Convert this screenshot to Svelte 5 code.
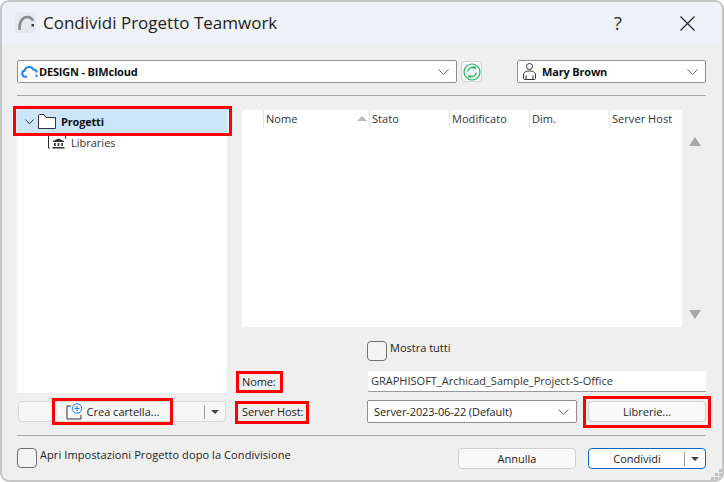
<script>
  const columns = [
    { label: 'Stato', w: 80 },
    { label: 'Modificato', w: 80 },
    { label: 'Dim.', w: 80 },
    { label: 'Server Host', w: 71 }
  ];
</script>

<div class="screen">
  <div class="dialog">
    <header class="titlebar">
      <svg class="logo" width="21" height="21" viewBox="0 0 21 21">
        <rect width="21" height="21" rx="3" fill="#e6e9ed" />
        <path d="M4.500 18 C4 10 7.500 5 12 5 C15 5 17 6.500 18 9" fill="none" stroke="#8a8a8a" stroke-width="2.600" />
        <rect x="16.500" y="12" width="2.500" height="2.500" fill="#3a3a3a" />
      </svg>
      <span class="title">Condividi Progetto Teamwork</span>
      <span class="help">?</span>
      <svg class="close" width="15" height="15" viewBox="0 0 15 15">
        <path d="M.5.500 14.500 14.500M14.500.5.500 14.500" stroke="#222" stroke-width="1.200" />
      </svg>
    </header>

    <div class="body">
      <div class="toprow">
        <div class="select server">
          <svg width="17" height="13" viewBox="0 0 17 13">
            <path d="M6 11.800H4.200A3.200 3.200 0 0 1 3.600 5.500 4.800 4.800 0 0 1 12.400 4.500 3.500 3.500 0 0 1 15.800 7.500" fill="none" stroke="#1b84ee" stroke-width="2" />
            <path d="M15.500 9.500v2.500" stroke="#1b84ee" stroke-width="1.800" />
          </svg>
          <b>DESIGN - BIMcloud</b>
          <svg class="chev" width="11" height="6" viewBox="0 0 11 6"><path d="M.5.500 5.500 5.300 10.500.5" fill="none" stroke="#6a6a6a" /></svg>
        </div>
        <div class="refresh">
          <svg width="18" height="18" viewBox="0 0 18 18">
            <circle cx="9" cy="9" r="8" fill="none" stroke="#22b463" stroke-width="1.200" />
            <path d="M4.800 8.500A4.300 4.300 0 0 1 11.500 5.300M13.200 9.500A4.300 4.300 0 0 1 6.500 12.700" fill="none" stroke="#22b463" stroke-width="1.300" />
            <path d="M9.500 3.200 13 3.400 12.300 6.800ZM8.500 14.800 5 14.600 5.700 11.200Z" fill="#22b463" />
          </svg>
        </div>
        <div class="select user">
          <svg width="13" height="17" viewBox="0 0 13 17" fill="none" stroke="#333">
            <circle cx="6.500" cy="3.500" r="3" />
            <path d="M2 16.500h9c1 0 1.500-.5 1.500-1.500v-3c0-2-1.500-3.500-4-4h-4C2 8.500.5 10 .5 12v3c0 1 .5 1.500 1.500 1.500ZM3 12.500v4M10 12.500v4" />
          </svg>
          <b>Mary Brown</b>
          <svg class="chev" width="11" height="6" viewBox="0 0 11 6"><path d="M.5.500 5.500 5.300 10.500.5" fill="none" stroke="#6a6a6a" /></svg>
        </div>
      </div>

      <hr class="rule first" />

      <div class="main">
        <div class="left">
          <div class="tree">
            <div class="node selected">
              <svg width="9" height="6" viewBox="0 0 9 6"><path d="M.5.500 4.500 4.800 8.500.5" fill="none" stroke="#333" /></svg>
              <svg class="folder" width="18" height="15" viewBox="0 0 18 15"><path d="M.5 14.500V1.500C.5 1 1 .5 1.500.5H6L8 3.500H17.500V14.500Z" fill="#fff" stroke="#333" /></svg>
              <b>Progetti</b>
            </div>
            <div class="node lib">
              <svg width="18" height="16" viewBox="0 0 18 16">
                <path d="M.5 15V.5H5.500L7 2.500H17.500V6M.5 15H2" fill="none" stroke="#333" />
                <path d="M5 8 10.500 5.500 16 8V9H5ZM6 10H7.700V13H6ZM9.700 10H11.300V13H9.700ZM13.300 10H15V13H13.300ZM4.500 14H16.500V15.500H4.500Z" fill="#333" />
              </svg>
              <span>Libraries</span>
            </div>
          </div>
          <div class="newfolder">
            <div class="nf-main">
              <svg width="17" height="17" viewBox="0 0 17 17" fill="none">
                <path d="M5 3H1V16H15V12" stroke="#333" />
                <circle cx="11" cy="5.500" r="4.700" stroke="#1a7fe8" />
                <path d="M11 3v5M8.500 5.500h5" stroke="#1a7fe8" />
              </svg>
              <span>Crea cartella...</span>
            </div>
            <div class="nf-arrow"><i class="tri"></i></div>
          </div>
        </div>

        <div class="right">
          <div class="listrow">
            <div class="table">
              <div class="thead">
                <div class="th spacer"></div>
                <div class="th name"><span>Nome</span><i class="sort"></i></div>
                {#each columns as c}
                  <div class="th" style="width:{c.w}px">{c.label}</div>
                {/each}
              </div>
            </div>
            <div class="scroll">
              <i class="up"></i>
              <i class="down"></i>
            </div>
          </div>

          <div class="show">
            <span class="check"></span>
            <span>Mostra tutti</span>
          </div>

          <div class="fields">
            <span class="lbl nome">Nome:</span>
            <div class="input">GRAPHISOFT_Archicad_Sample_Project-S-Office</div>
            <span class="lbl host">Server Host:</span>
            <div class="hostrow">
              <div class="select version">
                <span>Server-2023-06-22 (Default)</span>
                <svg class="chev" width="11" height="6" viewBox="0 0 11 6"><path d="M.5.500 5.500 5.300 10.500.5" fill="none" stroke="#6a6a6a" /></svg>
              </div>
              <div class="btn lib-btn">Librerie...</div>
            </div>
          </div>
        </div>
      </div>

      <hr class="rule second" />

      <div class="footer">
        <span class="check"></span>
        <span class="open">Apri Impostazioni Progetto dopo la Condivisione</span>
        <div class="btn cancel">Annulla</div>
        <div class="btn share">
          <span class="share-label">Condividi</span>
          <span class="share-arrow"><i class="tri"></i></span>
        </div>
      </div>
    </div>

    <svg class="grip" width="11" height="11" viewBox="0 0 11 11" fill="#c0c0c0">
      <rect x="8" y="0" width="3" height="3" /><rect x="4" y="4" width="3" height="3" /><rect x="8" y="4" width="3" height="3" />
      <rect x="0" y="8" width="3" height="3" /><rect x="4" y="8" width="3" height="3" /><rect x="8" y="8" width="3" height="3" />
    </svg>

    <div class="mark m1"></div>
    <div class="mark m2"></div>
    <div class="mark m3"></div>
    <div class="mark m4"></div>
    <div class="mark m5"></div>
  </div>
</div>

<style>
  :global(body) { margin: 0; background: #fff; }
  .screen { width: 724px; height: 482px; overflow: hidden; font: 11px "Open Sans", "Noto Sans", sans-serif; color: #1b1b1b; }
  .dialog {
    position: relative; box-sizing: border-box; width: 724px; height: 482px;
    border: 2px solid #c6c6c6; border-radius: 9px; background: #efefef; overflow: hidden;
  }
  .titlebar { height: 43px; background: #eef2f6; display: flex; align-items: center; padding-left: 13px; }
  .logo { margin: -2px 7px 0 0; }
  .title { font-size: 17px; color: #222; flex: 1; margin-top: -2px; }
  .help { font-size: 19px; color: #333; margin: -2px 58px 0 0; }
  .close { margin-right: 27px; }

  .body { padding: 15px 16px 0 15px; }
  .toprow { display: flex; height: 23px; }
  .select {
    box-sizing: border-box; height: 23px; display: flex; align-items: center; background: #fff;
    border: 1px solid #8f8f8f; border-radius: 2px; padding-right: 7px;
  }
  .select b, .node b { font-weight: 700; color: #111; letter-spacing: -0.18px; }
  .chev { margin-left: auto; }
  .server { width: 440px; padding-left: 3px; gap: 1px; }
  .refresh {
    box-sizing: border-box; width: 21px; height: 21px; margin: 1px 0 0 4px; border: 1px solid #d4d4d4; border-radius: 3px;
    background: #f6f6f6; display: flex; align-items: center; justify-content: center;
  }
  .user { width: 189px; margin-left: 35px; padding-left: 5px; gap: 6px; }
  hr.rule { border: 0; height: 1px; background: #a9a9a9; margin: 0; }
  hr.first { width: 689px; margin-top: 12px; }
  hr.second { width: 689px; margin-top: 12px; }

  .main { display: flex; margin-top: 13px; height: 314px; }
  .left { width: 210px; display: flex; flex-direction: column; }
  .tree { height: 284px; background: #fff; }
  .node { display: flex; align-items: center; }
  .selected { height: 25px; background: #cbe6fb; padding-left: 8px; gap: 4px; }
  .selected b { margin-left: 1px; }
  .lib { height: 18px; padding-left: 31px; gap: 5px; color: #333; }
  .lib svg { margin-top: -4px; }
  .lib span { margin-top: -2px; }
  .newfolder {
    box-sizing: border-box; width: 208px; height: 21px; margin: 8px 0 0 1px; display: flex; align-items: center;
    background: #f6f6f6; border: 1px solid #d8d8d8; border-radius: 4px;
  }
  .nf-main { flex: 1; display: flex; align-items: center; justify-content: center; gap: 4px; padding-left: 2px; }
  .nf-arrow { width: 20px; height: 14px; border-left: 1px solid #9a9a9a; display: flex; align-items: center; justify-content: center; }
  .tri { width: 0; height: 0; border: 4px solid transparent; border-top: 4px solid #444; border-bottom: 0; display: block; }

  .right { margin-left: 15px; width: 464px; }
  .listrow { display: flex; height: 218px; }
  .table { width: 440px; height: 217px; background: #fff; margin-top: 1px; }
  .thead { display: flex; height: 18px; }
  .th {
    box-sizing: border-box; height: 18px; border-left: 1px solid #e4e4e4; padding-left: 2px; line-height: 17px;
    color: #333; background: #fff; letter-spacing: 0.05px;
  }
  .th.spacer { width: 21px; border-left: 0; }
  .th.name { width: 106px; display: flex; align-items: flex-start; justify-content: space-between; padding-right: 2px; }
  .sort { width: 0; height: 0; margin-top: 6px; border: 5px solid transparent; border-bottom: 5px solid #b9b9b9; border-top: 0; }
  .scroll { position: relative; flex: 1; }
  .up, .down { position: absolute; left: 7px; width: 0; height: 0; border-left: 6px solid transparent; border-right: 6px solid transparent; }
  .up { top: 28px; border-bottom: 9px solid #a8a8a8; }
  .down { top: 201px; border-top: 9px solid #a8a8a8; }

  .show { display: flex; align-items: flex-start; margin: 14px 0 0 125px; height: 20px; gap: 3px; }
  .show span:last-child { margin-top: -1px; }
  .check { box-sizing: border-box; display: block; flex: none; width: 20px; height: 20px; background: #f3f3f3; border: 1px solid #707070; border-radius: 4px; }

  .fields { display: grid; grid-template-columns: 126px 1fr; grid-template-rows: 21px 23px; row-gap: 8px; margin-top: 10px; }
  .fields .lbl { align-self: center; color: #222; letter-spacing: -0.1px; }
  .input { width: 338px; box-sizing: border-box; background: #fff; border-bottom: 1px solid #9a9a9a; height: 21px; line-height: 20px; padding-left: 3px; color: #333; }
  .hostrow { display: flex; }
  .version { width: 210px; padding-left: 6px; margin-left: -1px; color: #222; letter-spacing: -0.1px; }
  .btn {
    box-sizing: border-box; height: 21px; background: #f9f9f9; border: 1px solid #d0d0d0; border-radius: 4px;
    display: flex; align-items: center; justify-content: center; color: #222;
  }
  .lib-btn { width: 118px; margin: 1px 0 0 11px; }

  .footer { display: flex; align-items: flex-start; margin-top: 12px; }
  .open { margin-left: 3px; margin-top: -1px; width: 418px; color: #222; letter-spacing: 0.085px; }
  .cancel { width: 118px; }
  .share { width: 118px; margin-left: 12px; border: 1px solid #0a64c2; background: #fdfdfd; justify-content: flex-start; }
  .share-label { flex: 1; text-align: center; padding-left: 1px; }
  .share-arrow { width: 20px; height: 14px; border-left: 1px solid #9a9a9a; display: flex; align-items: center; justify-content: center; }

  .grip { position: absolute; right: 0; bottom: 0; }
  .mark { position: absolute; box-sizing: border-box; border: 3px solid #f00; }
  .m1 { left: 11px; top: 104px; width: 219px; height: 30px; }
  .m2 { left: 234px; top: 369px; width: 47px; height: 22px; }
  .m3 { left: 233px; top: 399px; width: 74px; height: 23px; }
  .m4 { left: 50px; top: 396px; width: 121px; height: 27px; }
  .m5 { left: 581px; top: 394px; width: 128px; height: 32px; }
</style>
